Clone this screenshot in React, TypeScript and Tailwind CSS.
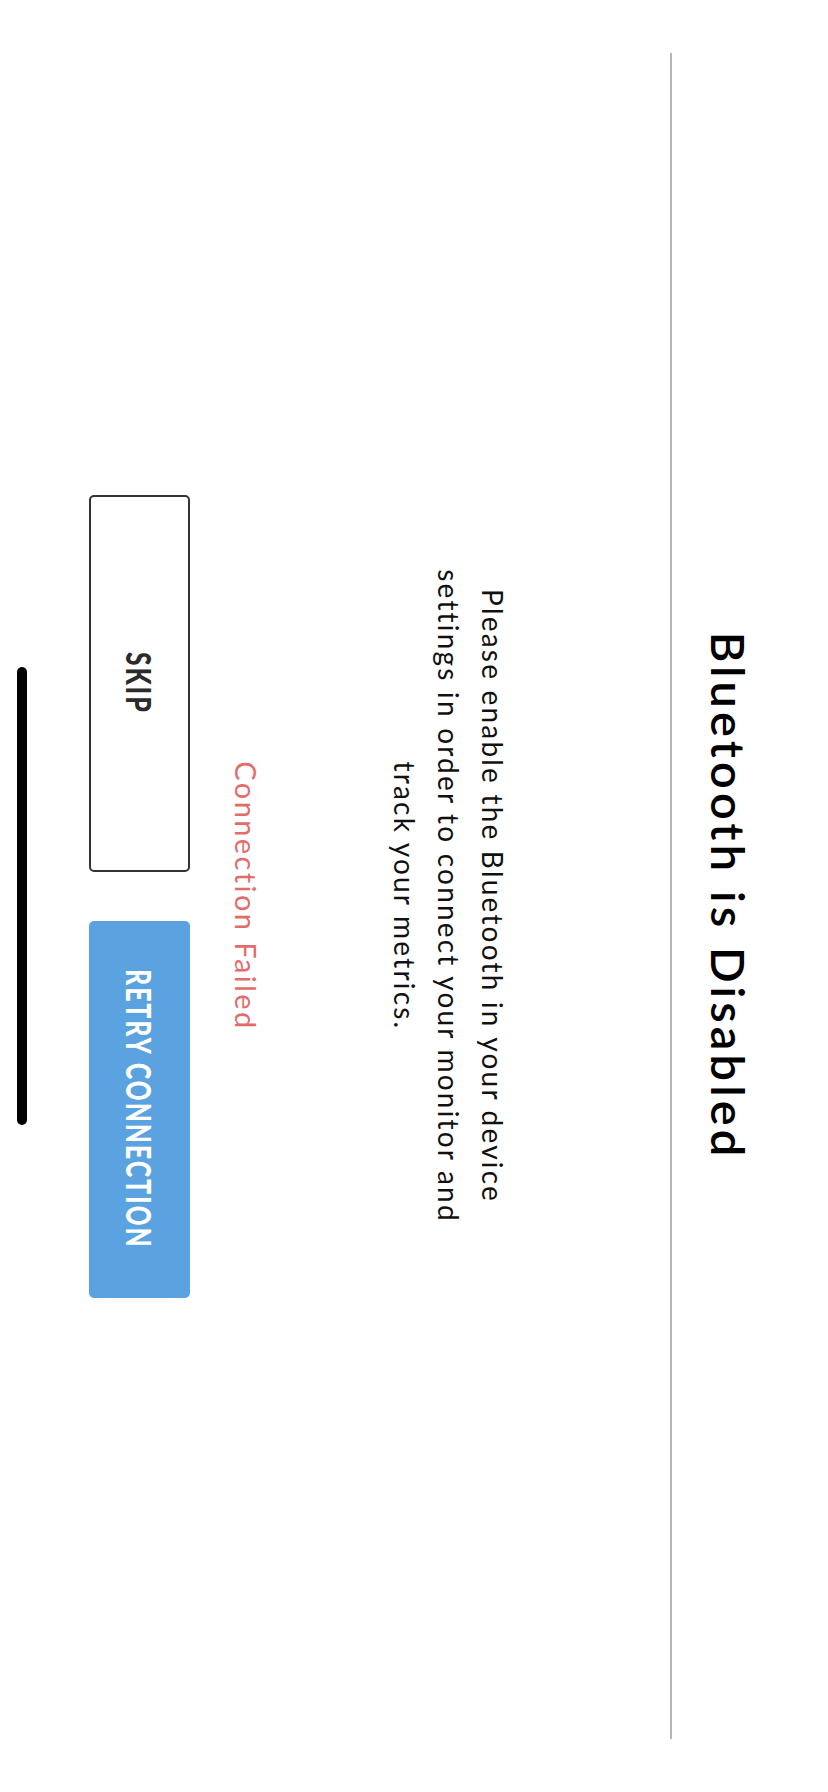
import React from "react";

export default function App() {
  return (
    <div className="relative w-[828px] h-[1792px] overflow-hidden bg-white">
      <div className="absolute top-0 left-[828px] origin-top-left rotate-90 w-[1792px] h-[828px] bg-white flex flex-col items-center font-['Lato','Open_Sans',sans-serif]">
        <div className="w-full px-[53px]">
          <div className="h-[158px] border-b-2 border-[#b5b5b5] flex justify-center">
            <h1 className="mt-[76px] text-[47px] leading-[47px] font-semibold tracking-[4.1px] text-black">
              Bluetooth is Disabled
            </h1>
          </div>
        </div>
        <p className="mt-[155px] text-center text-[28px] leading-[44px] tracking-[2.2px] text-[#111]">
          Please enable the Bluetooth in your device
          <br />
          settings in order to connect your monitor and
          <br />
          track your metrics.
        </p>
        <div className="mt-[122px] text-[29px] leading-[29px] tracking-[2.4px] text-[#e46b6b]">
          Connection Failed
        </div>
        <div className="mt-[42px] flex gap-[49px]">
          <button className="w-[377px] h-[101px] border-2 border-[#333] rounded-[5px] flex items-center justify-center bg-white text-[#2b2b2b] text-[34px] leading-none font-black tracking-[3px] font-['Lato',sans-serif]">
            <span className="inline-block scale-x-[0.72]">SKIP</span>
          </button>
          <button className="w-[377px] h-[101px] rounded-[5px] flex items-center justify-center bg-[#5ba3e0] text-white text-[34px] leading-none font-black tracking-[3px] font-['Lato',sans-serif]">
            <span className="inline-block whitespace-nowrap scale-x-[0.72]">RETRY CONNECTION</span>
          </button>
        </div>
        <div className="mt-[62px] w-[458px] h-[10px] rounded-full bg-black" />
      </div>
    </div>
  );
}
